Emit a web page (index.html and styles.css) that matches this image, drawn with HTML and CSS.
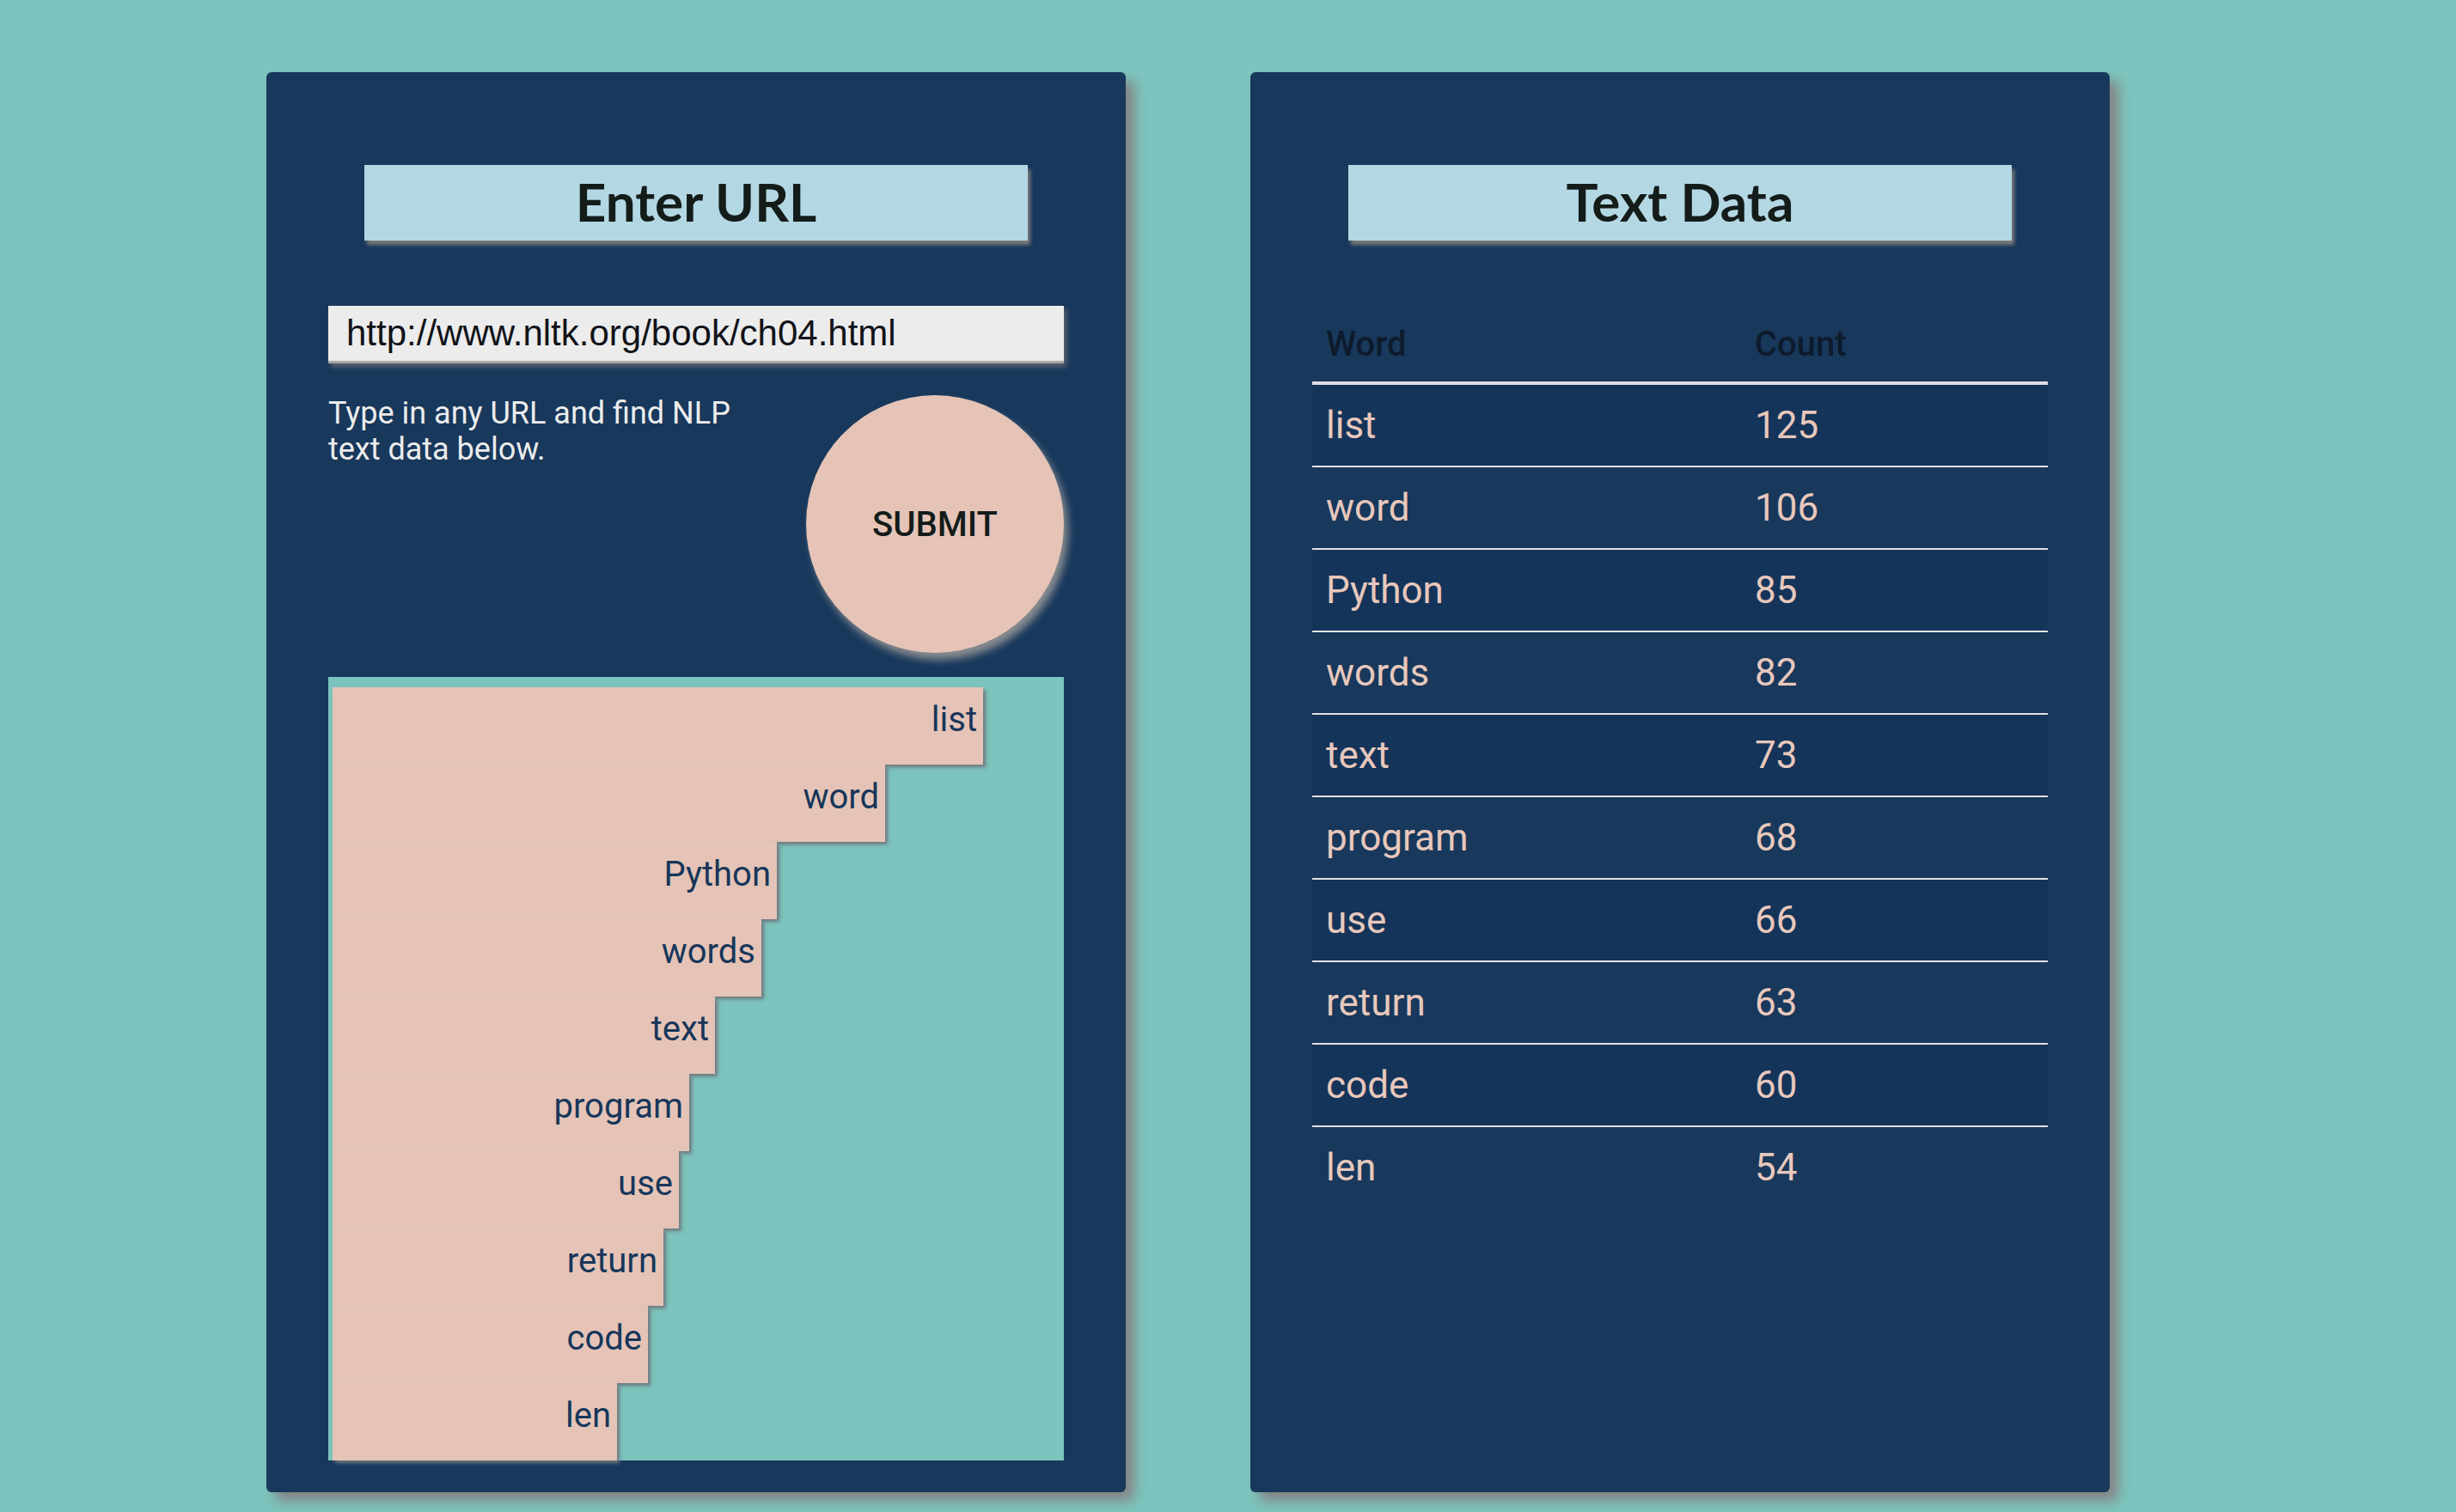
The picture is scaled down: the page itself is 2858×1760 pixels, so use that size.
FILE: index.html
```html
<!DOCTYPE html>
<html lang="en">
<head>
<meta charset="utf-8">
<title>NLP Text Data</title>
<link rel="stylesheet" href="styles.css">
</head>
<body>
<main class="board">
  <section class="card">
    <h1 class="card-title">Enter URL</h1>
    <input class="url-field" type="text" value="http://www.nltk.org/book/ch04.html">
    <div class="form-row">
      <p class="hint">Type in any URL and find NLP text data below.</p>
      <button class="submit" type="button">SUBMIT</button>
    </div>
    <div class="chart">
      <div class="bar" style="width:757px">list</div>
      <div class="bar" style="width:643px">word</div>
      <div class="bar" style="width:517px">Python</div>
      <div class="bar" style="width:499px">words</div>
      <div class="bar" style="width:445px">text</div>
      <div class="bar" style="width:415px">program</div>
      <div class="bar" style="width:403px">use</div>
      <div class="bar" style="width:385px">return</div>
      <div class="bar" style="width:367px">code</div>
      <div class="bar" style="width:331px">len</div>
    </div>
  </section>
  <section class="card">
    <h1 class="card-title">Text Data</h1>
    <div class="table">
      <div class="t-head"><span>Word</span><span>Count</span></div>
      <div class="t-row"><span>list</span><span>125</span></div>
      <div class="t-row"><span>word</span><span>106</span></div>
      <div class="t-row"><span>Python</span><span>85</span></div>
      <div class="t-row"><span>words</span><span>82</span></div>
      <div class="t-row"><span>text</span><span>73</span></div>
      <div class="t-row"><span>program</span><span>68</span></div>
      <div class="t-row"><span>use</span><span>66</span></div>
      <div class="t-row"><span>return</span><span>63</span></div>
      <div class="t-row"><span>code</span><span>60</span></div>
      <div class="t-row"><span>len</span><span>54</span></div>
    </div>
  </section>
</main>
</body>
</html>
```

FILE: styles.css
```css
html, body {
  margin: 0;
  padding: 0;
}
body {
  background: #7cc4bd;
  font-family: Roboto, "Liberation Sans", sans-serif;
  min-height: 1760px;
}
.board {
  display: flex;
  align-items: stretch;
  gap: 145px;
  padding: 84px 0 0 310px;
}
.card {
  width: 1000px;
  box-sizing: border-box;
  padding: 108px 72px 37px;
  background: #18385c;
  border-radius: 6px;
  box-shadow: 10px 10px 14px #858585;
  display: flex;
  flex-direction: column;
}
.card-title {
  width: 772px;
  height: 88px;
  margin: 0 auto;
  padding-bottom: 4px;
  box-sizing: border-box;
  background: #b4d8e3;
  box-shadow: 3px 5px 4px #7a7a7a;
  display: flex;
  align-items: center;
  justify-content: center;
  font-family: Lato, "Open Sans", sans-serif;
  font-weight: 700;
  font-size: 62px;
  color: #141c1a;
}
.url-field {
  display: block;
  width: 100%;
  height: 67px;
  box-sizing: border-box;
  margin: 76px 0 0;
  padding: 0 0 0 21px;
  border: none;
  border-bottom: 3px solid #a8a8a8;
  border-radius: 0;
  background: #ececec;
  box-shadow: 3px 4px 6px #5f6670;
  font-family: "Liberation Sans", Arial, sans-serif;
  font-size: 42px;
  color: #111318;
  outline: none;
}
.form-row {
  display: flex;
  justify-content: space-between;
  align-items: flex-start;
  margin-top: 37px;
}
.hint {
  margin: 0;
  width: 520px;
  font-size: 36px;
  line-height: 42px;
  color: #ececec;
}
.submit {
  width: 300px;
  height: 300px;
  border: none;
  border-radius: 50%;
  background: #e5c4b7;
  box-shadow: 5px 8px 10px #8a8d90;
  font-family: Roboto, sans-serif;
  font-weight: 500;
  font-size: 40px;
  color: #141c1a;
  padding: 0;
  cursor: pointer;
}
.chart {
  margin-top: 28px;
  height: 912px;
  box-sizing: border-box;
  padding: 12px 0 0 5px;
  background: #7cc4bd;
}
.bar {
  height: 90px;
  box-sizing: border-box;
  padding: 14px 7px 0 0;
  background: #e5c4b7;
  box-shadow: 3px 3px 4px #707880;
  text-align: right;
  font-size: 40px;
  line-height: 47px;
  color: #17365a;
}
.table {
  margin-top: 75px;
}
.t-head,
.t-row {
  display: grid;
  grid-template-columns: 499px 1fr;
}
.t-head span,
.t-row span {
  padding-left: 16px;
}
.t-head {
  padding: 22px 0 20px;
  font-size: 40px;
  font-weight: 500;
  line-height: 47px;
  color: #0d1b2c;
  border-bottom: 4px solid #dedede;
}
.t-row {
  padding: 21px 0;
  font-size: 44px;
  line-height: 52px;
  color: #e8c8bc;
  border-bottom: 2px solid #e2e2e2;
}
.t-row:nth-child(even) {
  background: #15345a;
}
.t-row:last-child {
  border-bottom: none;
}
```
